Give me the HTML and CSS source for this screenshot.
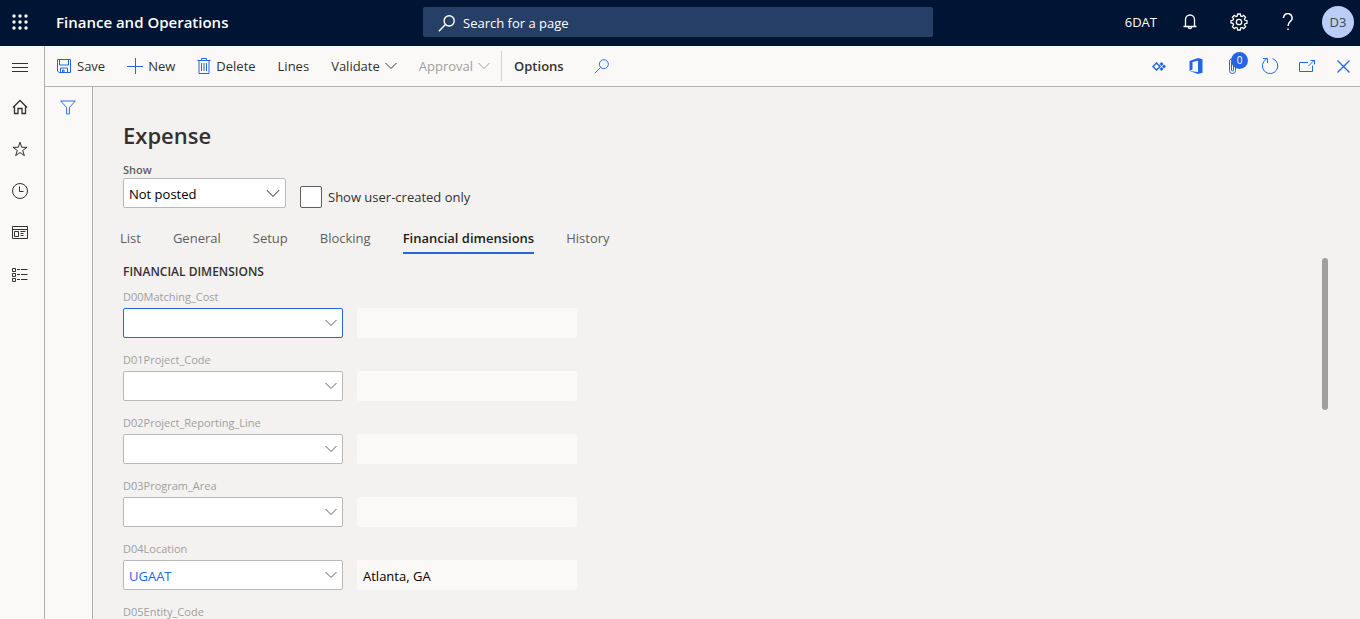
FILE: index.html
```html
<!DOCTYPE html>
<html lang="en">
<head>
<meta charset="utf-8">
<meta name="viewport" content="width=device-width, initial-scale=1">
<title>Expense - Finance and Operations</title>
<link rel="stylesheet" href="styles.css">
</head>
<body>
<svg class="sprite" aria-hidden="true">
  <symbol id="chevron" viewBox="0 0 12 8"><path d="M.5 1 6 6.500 11.500 1"/></symbol>
  <symbol id="magnifier" viewBox="0 0 16 16"><circle cx="10.500" cy="5.500" r="4.800"/><path d="M7 9 .8 15.200"/></symbol>
</svg>

<header class="topbar">
  <div class="brand">
    <button class="icon-btn waffle" aria-label="App launcher">
      <svg width="16" height="16" viewBox="0 0 16 16" class="solid"><circle cx="2" cy="2" r="1.700"/><circle cx="8" cy="2" r="1.700"/><circle cx="14" cy="2" r="1.700"/><circle cx="2" cy="8" r="1.700"/><circle cx="8" cy="8" r="1.700"/><circle cx="14" cy="8" r="1.700"/><circle cx="2" cy="14" r="1.700"/><circle cx="8" cy="14" r="1.700"/><circle cx="14" cy="14" r="1.700"/></svg>
    </button>
    <a class="brand-name" href="#">Finance and Operations</a>
  </div>
  <label class="page-search">
    <svg class="bold" width="17" height="17"><use href="#magnifier"/></svg>
    <input type="text" placeholder="Search for a page" aria-label="Search for a page">
  </label>
  <div class="account">
    <button class="company">6DAT</button>
    <button class="icon-btn top-icon" aria-label="Notifications">
      <svg class="bold" width="14" height="16" viewBox="0 0 14 16"><path d="M.5 12.500h13M2.500 12.500V5.500a4.500 4.500 0 0 1 9 0v7M5.200 12.800a1.800 1.800 0 0 0 3.600 0"/></svg>
    </button>
    <button class="icon-btn top-icon" aria-label="Settings">
      <svg class="bold" width="18" height="18" viewBox="0 0 18 18"><path d="M7.700 1h2.600l.4 2 1.300.6 1.700-1.200 1.900 1.900-1.200 1.700.6 1.300 2 .4v2.600l-2 .4-.6 1.300 1.200 1.700-1.900 1.900-1.700-1.200-1.300.6-.4 2H7.700l-.4-2-1.300-.6-1.700 1.200-1.900-1.900L3.600 12 3 10.300l-2-.4V7.700l2-.4L3.600 6 2.400 4.300l1.900-1.900L6 3.600 7.300 3z"/><circle cx="9" cy="9" r="2.700"/></svg>
    </button>
    <button class="icon-btn top-icon" aria-label="Help">
      <svg width="12" height="18" viewBox="0 0 12 18" class="heavy"><path d="M1.500 5a4.300 4.300 0 1 1 7.600 2.600C7.700 9.200 6 10 6 13M6 15.500V17"/></svg>
    </button>
    <button class="avatar">D3</button>
  </div>
</header>

<div class="workspace">
  <nav class="rail" aria-label="Navigation">
    <button class="icon-btn" aria-label="Expand navigation"><svg width="16" height="10" viewBox="0 0 16 10"><path d="M0 .5h16M0 4.500h16M0 8.500h16"/></svg></button>
    <button class="icon-btn" aria-label="Home"><svg class="bold" width="16" height="16" viewBox="0 0 16 16"><path d="M1 8.500 8 1.500l7 7M2.500 7.500v7h3.500v-5h4v5h3.500v-7"/></svg></button>
    <button class="icon-btn" aria-label="Favorites"><svg width="16" height="16" viewBox="0 0 16 16"><path d="m8 1.200 1.700 5.100H15l-4.300 3.200 1.700 5.200L8 11.500l-4.400 3.200 1.700-5.200L1 6.300h5.300z"/></svg></button>
    <button class="icon-btn" aria-label="Recent"><svg width="16" height="16" viewBox="0 0 16 16"><circle cx="8" cy="8" r="7.500"/><path d="M7.500 3.500v5h4"/></svg></button>
    <button class="icon-btn" aria-label="Workspaces"><svg width="16" height="14" viewBox="0 0 16 14"><path d="M.5.5h15v12H.5zM.5 3.500h15M2.500 5.500h4v5h-4zM8.500 5.500h5M8.500 7.500h3M8.500 9.500h3"/></svg></button>
    <button class="icon-btn" aria-label="Modules"><svg width="16" height="14" viewBox="0 0 16 14"><path d="M.5.5h3v3h-3zM.5 5.500h3v3h-3zM.5 10.500h3v3h-3zM5 1.500h3M9 1.500h6.500M5 6.500h3M9 6.500h6.500M5 11.500h3M9 11.500h6.500"/></svg></button>
  </nav>

  <div class="content">
    <div class="toolbar" role="toolbar" aria-label="Actions">
      <div class="actions">
        <button class="action"><svg class="blue" width="16" height="16" viewBox="0 0 16 16"><path d="M1.500 1.500h13v13H3l-1.500-1.500zM3.500 1.500v5.500h9V1.500M4.500 14.500v-4.500h7v4.500M6.500 14.500v-2.500h1.500v2.500"/></svg>Save</button>
        <button class="action"><svg class="blue" width="16" height="16" viewBox="0 0 16 16"><path d="M8.500 0v16M0 8.500h16"/></svg>New</button>
        <button class="action delete"><svg class="blue" width="14" height="16" viewBox="0 0 14 16"><path d="M.5 2.500h13M4.500 2.500v-2h5v2M2 2.500v13h10v-13M4.500 5v8M7 5v8M9.500 5v8"/></svg>Delete</button>
        <button class="action">Lines</button>
        <button class="action">Validate<svg width="12" height="8"><use href="#chevron"/></svg></button>
        <button class="action" disabled>Approval<svg width="12" height="8"><use href="#chevron"/></svg></button>
      </div>
      <button class="action options">Options</button>
      <button class="action find" aria-label="Search actions"><svg class="blue" width="15" height="15"><use href="#magnifier"/></svg></button>
      <div class="tools">
        <button class="icon-btn blue" aria-label="Power Apps"><svg width="14" height="9" viewBox="0 0 14 9" class="heavy"><path d="M4.500 1 8 4.500 4.500 8 1 4.500z"/><path d="M9.500 0 11.500 2 9.500 4 7.500 2zM12 2.500l2 2-2 2-2-2zM9.500 5l2 2-2 2-2-2z" class="solid"/></svg></button>
        <button class="icon-btn blue" aria-label="Open in Office"><svg width="14" height="16" viewBox="0 0 14 16" class="solid"><path fill-rule="evenodd" d="M.5 3 9 0l4.500 1.300v13.400L9 16 .5 13 9 14V2.700L3.500 4v7.500L.5 13z"/></svg></button>
        <button class="icon-btn blue attach" aria-label="Attachments, 0"><svg width="10" height="16" viewBox="0 0 10 16"><path d="M7.500 4v8.500a3 3 0 0 1-6 0V3a2 2 0 0 1 4 0v9a1 1 0 0 1-2 0V4"/></svg><span class="badge">0</span></button>
        <button class="icon-btn blue" aria-label="Refresh"><svg width="18" height="18" viewBox="0 0 18 18"><path d="M11.500 1.600A7.700 7.700 0 1 1 5.500 2.100M2 1.500h4.500V6"/></svg></button>
        <button class="icon-btn blue" aria-label="Open in new window"><svg width="16" height="14" viewBox="0 0 16 14"><path d="M9 3.500H.5v9h13v-6M9.500 7l6-6M11.500 1.500h4v4"/></svg></button>
        <button class="icon-btn blue" aria-label="Close"><svg class="bold" width="13" height="13" viewBox="0 0 13 13"><path d="m.5.5 12 12M12.500.5l-12 12"/></svg></button>
      </div>
    </div>

    <div class="body">
      <aside class="filter-pane">
        <button class="icon-btn blue" aria-label="Show filters"><svg width="16" height="15" viewBox="0 0 17 15"><path d="M.7.600h15.600L10 7.500v6.900H7V7.500z"/></svg></button>
      </aside>

      <main class="page">
        <h1 class="page-title">Expense</h1>
        <div class="page-filters">
          <div class="show-field">
            <label class="show-label" for="show">Show</label>
            <span class="combo"><select id="show"><option>Not posted</option></select><svg width="14" height="9" viewBox="0 0 12 8"><use href="#chevron"/></svg></span>
          </div>
          <label class="check"><input type="checkbox">Show user-created only</label>
        </div>

        <div class="tabs" role="tablist">
          <button class="tab" role="tab">List</button>
          <button class="tab" role="tab">General</button>
          <button class="tab" role="tab">Setup</button>
          <button class="tab" role="tab">Blocking</button>
          <button class="tab current" role="tab" aria-selected="true">Financial dimensions</button>
          <button class="tab" role="tab">History</button>
        </div>

        <div class="panel" role="tabpanel">
          <div class="dimensions">
            <h2 class="section-title">FINANCIAL DIMENSIONS</h2>
            <div class="dimension">
              <label for="d00">D00Matching_Cost</label>
              <span class="combo active"><select id="d00"><option></option></select><svg width="12" height="8"><use href="#chevron"/></svg></span>
              <input class="readout" type="text" readonly aria-label="D00Matching_Cost name">
            </div>
            <div class="dimension">
              <label for="d01">D01Project_Code</label>
              <span class="combo"><select id="d01"><option></option></select><svg width="12" height="8"><use href="#chevron"/></svg></span>
              <input class="readout" type="text" readonly aria-label="D01Project_Code name">
            </div>
            <div class="dimension">
              <label for="d02">D02Project_Reporting_Line</label>
              <span class="combo"><select id="d02"><option></option></select><svg width="12" height="8"><use href="#chevron"/></svg></span>
              <input class="readout" type="text" readonly aria-label="D02Project_Reporting_Line name">
            </div>
            <div class="dimension">
              <label for="d03">D03Program_Area</label>
              <span class="combo"><select id="d03"><option></option></select><svg width="12" height="8"><use href="#chevron"/></svg></span>
              <input class="readout" type="text" readonly aria-label="D03Program_Area name">
            </div>
            <div class="dimension">
              <label for="d04">D04Location</label>
              <span class="combo linked"><select id="d04"><option>UGAAT</option></select><svg width="12" height="8"><use href="#chevron"/></svg></span>
              <input class="readout" type="text" readonly value="Atlanta, GA" aria-label="D04Location name">
            </div>
            <div class="dimension">
              <label for="d05">D05Entity_Code</label>
              <span class="combo"><select id="d05"><option></option></select><svg width="12" height="8"><use href="#chevron"/></svg></span>
              <input class="readout" type="text" readonly aria-label="D05Entity_Code name">
            </div>
          </div>
          <div class="scroll-track"><div class="scroll-thumb"></div></div>
        </div>
      </main>
    </div>
  </div>
</div>
</body>
</html>
```
FILE: styles.css
```css
:root {
  --navy: #001433;
  --blue: #2266e3;
  --surface: #faf9f8;
  --page: #f3f2f1;
  --line: #b3b0ad;
  --text: #323130;
  --muted: #605e5c;
  --faint: #a19f9d;
}

* { box-sizing: border-box; }

body {
  margin: 0;
  height: 100vh;
  display: flex;
  flex-direction: column;
  overflow: hidden;
  background: var(--page);
  color: var(--text);
  font: 13px/20px "Open Sans", "Noto Sans", sans-serif;
}

button, input, select {
  margin: 0;
  padding: 0;
  border: 0;
  background: none;
  color: inherit;
  font: inherit;
}

svg {
  flex: none;
  fill: none;
  stroke: currentColor;
  stroke-width: 1;
}

.sprite { display: none; }
.bold { stroke-width: 1.3; }
.heavy { stroke-width: 1.5; }
.solid { fill: currentColor; stroke: none; }
.blue { color: var(--blue); }

.icon-btn {
  display: flex;
  align-items: center;
  justify-content: center;
}

/* Top bar */
.topbar {
  flex: none;
  display: grid;
  grid-template-columns: 1fr minmax(200px, 510px) 1fr;
  align-items: center;
  height: 46px;
  padding: 0 4px 2px 0;
  background: var(--navy);
  color: #fff;
}

.brand { display: flex; align-items: center; }
.waffle { width: 40px; height: 44px; }

.brand-name {
  padding-left: 16px;
  color: #fff;
  font-size: 15px;
  font-weight: 600;
  text-decoration: none;
  white-space: nowrap;
}

.page-search {
  display: flex;
  align-items: center;
  gap: 8px;
  height: 30px;
  padding: 2px 15px 0;
  border-radius: 2px;
  background: #263f66;
}

.page-search input { flex: 1; min-width: 0; outline: 0; }
.page-search input::placeholder { color: #fff; opacity: 1; }

.account { display: flex; align-items: center; justify-content: flex-end; }
.company { padding-right: 8px; }
.top-icon { width: 49px; height: 44px; }

.avatar {
  width: 32px;
  height: 32px;
  margin: 0 2px 0 10px;
  border-radius: 50%;
  background: #b9cdf6;
  color: #484644;
}

/* Frame */
.workspace { flex: 1; display: flex; min-height: 0; }

.rail {
  flex: none;
  width: 45px;
  border-right: 1px solid var(--line);
  background: var(--surface);
}

.rail .icon-btn { width: 40px; height: 42px; }
.rail .icon-btn:first-child { height: 40px; padding-top: 4px; }

.content { flex: 1; display: flex; flex-direction: column; min-width: 0; }

.toolbar {
  flex: none;
  display: flex;
  align-items: center;
  height: 41px;
  border-bottom: 1px solid var(--line);
  background: var(--surface);
}

.actions {
  display: flex;
  align-items: center;
  gap: 22px;
  height: 30px;
  padding: 0 11px 0 11px;
  border-right: 1px solid #d2d0ce;
}

.action { display: flex; align-items: center; gap: 5px; white-space: nowrap; }
.action:disabled { color: var(--faint); }
.options { padding: 0 30px 0 12px; font-weight: 600; }

.tools { display: flex; margin-left: auto; }
.tools .icon-btn { position: relative; left: 0; width: 37px; height: 40px; }
.tools { margin-right: -2px; }

.badge {
  position: absolute;
  top: 6px;
  left: 17px;
  width: 17px;
  height: 17px;
  border-radius: 50%;
  background: var(--blue);
  color: #fff;
  font-size: 10px;
  line-height: 17px;
}

.body { flex: 1; display: flex; min-height: 0; }

.filter-pane {
  flex: none;
  width: 48px;
  border-right: 1px solid var(--line);
  background: var(--surface);
}

.filter-pane .icon-btn { width: 46px; height: 40px; }

/* Page */
.page {
  flex: 1;
  display: flex;
  flex-direction: column;
  min-width: 0;
  padding: 31px 32px 0 30px;
}

.page-title { margin: 0; font-size: 22px; font-weight: 600; line-height: 34px; }

.page-filters { display: flex; align-items: flex-end; gap: 14px; padding-top: 9px; }
.show-field { width: 163px; }

.show-label {
  display: block;
  color: var(--muted);
  font-size: 11px;
  font-weight: 600;
  line-height: 17px;
}

.combo { display: grid; align-items: center; }
.combo > * { grid-area: 1 / 1; }
.combo svg { justify-self: end; margin-right: 6px; color: var(--muted); pointer-events: none; }

.combo select {
  width: 100%;
  height: 30px;
  padding: 2px 24px 0 5px;
  border: 1px solid #bab8b6;
  border-radius: 2px;
  background: #fff;
  color: #000;
  appearance: none;
  outline: 0;
}

.combo.active select { border-color: var(--blue); }
.combo.linked select { color: var(--blue); }

.check { display: flex; align-items: center; gap: 6px; }

.check input {
  width: 22px;
  height: 22px;
  border: 1px solid var(--muted);
  border-radius: 2px;
  background: #fff;
  appearance: none;
}

.tabs { display: flex; gap: 32px; margin-left: -3px; padding-top: 18px; }

.tab {
  padding: 2px 0 4px;
  border-bottom: 2px solid transparent;
  color: var(--muted);
  white-space: nowrap;
}

.tab.current { border-color: var(--blue); color: #201f1e; font-weight: 600; }

.panel {
  flex: 1;
  display: flex;
  justify-content: space-between;
  min-height: 0;
  padding-top: 4px;
}

.dimensions { overflow: hidden; }

.section-title { margin: 0; padding: 4px 0 6px; font-size: 12px; font-weight: 600; }

.dimension {
  display: grid;
  grid-template-columns: 220px 220px;
  column-gap: 14px;
  padding-bottom: 13px;
}

.dimension label {
  grid-column: 1 / -1;
  padding: 2px 0 4px;
  color: var(--faint);
  font-size: 11px;
  line-height: 14px;
}

.readout {
  height: 30px;
  padding: 2px 6px 0;
  border-radius: 2px;
  background: var(--surface);
  color: #000;
  outline: 0;
}

.scroll-track { width: 6px; }
.scroll-thumb { height: 42%; border-radius: 3px; background: var(--faint); }
```
